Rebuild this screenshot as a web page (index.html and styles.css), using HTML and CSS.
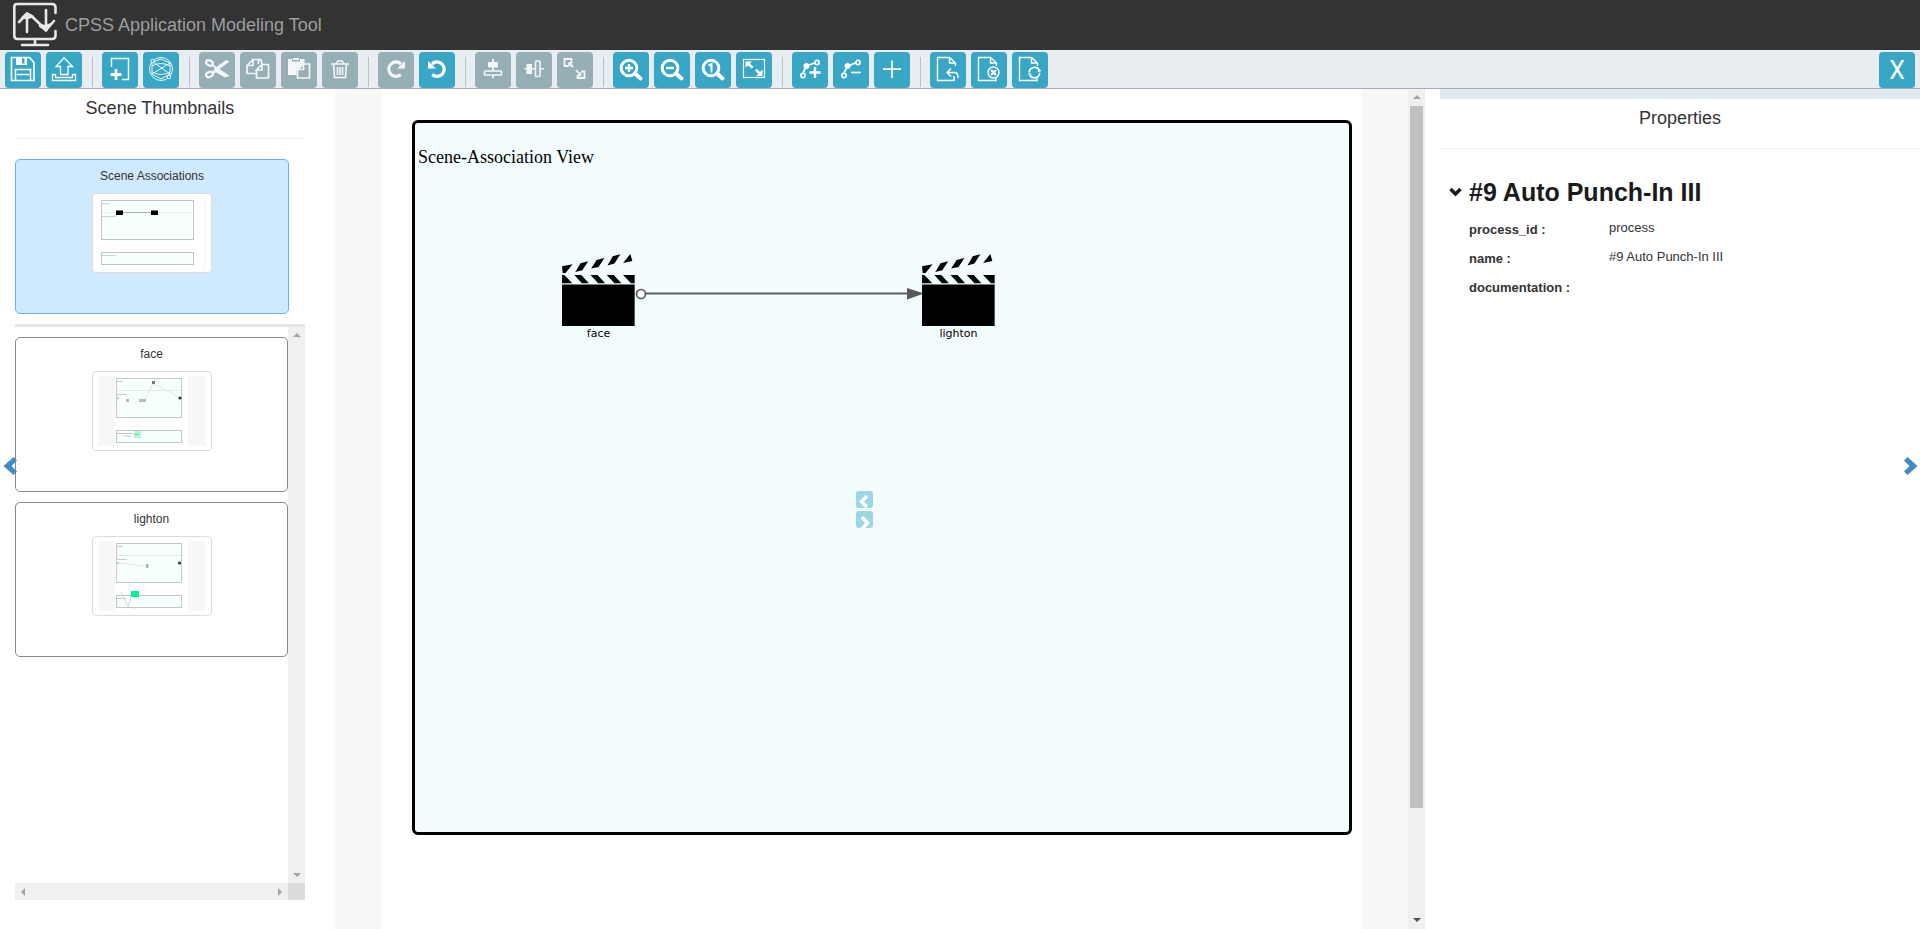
FILE: index.html
```html
<!DOCTYPE html>
<html lang="en">
<head>
<meta charset="utf-8">
<title>CPSS Application Modeling Tool</title>
<link rel="stylesheet" href="styles.css">
</head>
<body>
<svg width="0" height="0" class="defs" aria-hidden="true">
  <defs>
    <symbol id="clapper" viewBox="0 0 220 217">
      <path d="M0 37L32 31L10 58L2 57ZM40 54L56 28L79 22L61 49ZM88 44L104 18L128 12L110 39ZM137 35L153 7L176 1L158 29ZM184 27L206 0L212 21ZM0 63H7L31 88H0ZM37 63H58L81 88H60ZM86 63H107L130 88H109ZM135 63H156L179 88H158ZM184 63H219V88H208ZM0 92H219V217H0Z"/>
    </symbol>
    <symbol id="magnifier" viewBox="0 0 36 36">
      <circle cx="16" cy="16" r="7.8" fill="none" stroke="#fff" stroke-width="3"/>
      <path d="M22 21.500L27.500 26.500" stroke="#fff" stroke-width="4" stroke-linecap="round"/>
    </symbol>
    <symbol id="page" viewBox="0 0 36 36">
      <path d="M15 28.500H7.500V5.500H19.500L25.500 11V14M19.500 5.500V11H25.500" fill="none" stroke="#fff" stroke-width="1.4"/>
    </symbol>
    <symbol id="chevron" viewBox="0 0 14 20">
      <path d="M10.500 1L14 4.500L8.500 10L14 15.500L10.500 19L0.500 10Z" fill="currentColor"/>
    </symbol>
  </defs>
</svg>

<header class="topbar">
  <svg class="logo" viewBox="0 0 46 46" width="46" height="46" fill="none" stroke="#e8e8e8" stroke-width="2.600" stroke-linecap="round" stroke-linejoin="round">
    <path d="M43.500 11V5.500Q43.500 2 40 2H5Q2.300 2 2.300 5V33.500Q2.300 37 5.500 37H40Q43.500 37 43.500 33.500V29"/>
    <path d="M23 37V42M10 43H36"/>
    <path d="M15 30V14M7 20L15 12L19.500 14L31 25L34 27V8M28 24L34 28L42 19"/>
    <path d="M10 16L15 11L21 14.500L16 16ZM28 23L34 24L39 22L34 29Z" fill="#e8e8e8" stroke-width="2"/>
  </svg>
  <span class="brand">CPSS Application Modeling Tool</span>
</header>

<nav class="toolbar" aria-label="Tools">
  <button class="tool" aria-label="Save"><svg viewBox="0 0 36 36"><path d="M6.500 5.500H24.500L29 10.500V28.500H6.500Z" fill="none" stroke="#fff" stroke-width="1.600"/><path d="M11 5H17V12H11ZM19.500 5H22V12H19.500ZM11 11.500H22V13H11Z" fill="#fff"/><path d="M10.500 28V17.500H25.500V28M12 22.500H24" fill="none" stroke="#fff" stroke-width="1.600"/></svg></button>
  <button class="tool" aria-label="Export"><svg viewBox="0 0 36 36" fill="none" stroke="#fff" stroke-width="1.300"><path d="M14.500 22.500V14.500H10L18 5.800L26.500 14.500H22V22.500ZM9 22.500H6.500V28.500H29.500V22.500H27M9.500 22V25.500H26.500V22"/></svg></button>
  <span class="sep"></span>
  <button class="tool" aria-label="New scene"><svg viewBox="0 0 36 36" fill="none" stroke="#fff"><path d="M9.500 15V6.500H26.500V27.500H20" stroke-width="1.400"/><path d="M14 17V28M8.500 22.500H19.500" stroke-width="2.800"/></svg></button>
  <button class="tool" aria-label="Network"><svg viewBox="0 0 36 36" fill="none" stroke="#fff" stroke-width=".9"><circle cx="18" cy="17" r="11.500"/><path d="M10 10L18 7L27 11V22L18 27L9 22V11M10 10L27 22M9 22L27 11M9 14Q18 9 27 14M9 20Q18 25 27 20"/><circle cx="9.500" cy="9" r="1.700" fill="#38a7c6"/><circle cx="26" cy="25" r="1.700" fill="#38a7c6"/></svg></button>
  <span class="sep"></span>
  <button class="tool off" aria-label="Cut"><svg viewBox="0 0 36 36" fill="none" stroke="#fff"><ellipse cx="10.500" cy="11" rx="3.600" ry="2.400" stroke-width="2.200" transform="rotate(25 10.500 11)"/><ellipse cx="10.500" cy="22.500" rx="3.600" ry="2.400" stroke-width="2.200" transform="rotate(-25 10.500 22.500)"/><path d="M13.500 12.500L19 16.500L30 23.800L26 25L17 20L13.500 21.500L16 17L13.500 12.500ZM18 15L27 8.500L30 9.500L20 17Z" fill="#fff" stroke-width=".8"/></svg></button>
  <button class="tool off" aria-label="Copy"><svg viewBox="0 0 36 36" fill="none" stroke="#fff" stroke-width="1.700"><path d="M15.500 21.500H7V13.500L13 7.500H18.500V12M13 7.500V13.500H7"/><path d="M16.500 18V26H28.500V12.500H22L16.500 18H22V12.500M18.500 7.500H21L22 12"/></svg></button>
  <button class="tool off" aria-label="Paste"><svg viewBox="0 0 36 36"><path d="M7 7H11V9.500H19V7H23.500V11L15.500 17V23H7ZM12 6H18V8H12Z" fill="#fff"/><path d="M16.500 17.500V26H28.500V12H22.500L16.500 17.500H22.500V12" fill="#96afb5" stroke="#fff" stroke-width="1.700"/></svg></button>
  <button class="tool off" aria-label="Delete"><svg viewBox="0 0 36 36" fill="none" stroke="#fff" stroke-width="1.600"><path d="M9 12H27M14 11.500L16 9H20L22 11.500M11.500 12L12.500 25.500H23.500L24.500 12M15.500 15V23M18 15V23M20.500 15V23"/></svg></button>
  <span class="sep"></span>
  <button class="tool off" aria-label="Redo"><svg viewBox="0 0 36 36"><path d="M22.800 22.500A7.200 7.200 0 1 1 23 12" fill="none" stroke="#fff" stroke-width="3.200"/><path d="M27 9V16.500H19Z" fill="#fff"/></svg></button>
  <button class="tool" aria-label="Undo"><svg viewBox="0 0 36 36"><path d="M13.200 22.500A7.200 7.200 0 1 0 13 12" fill="none" stroke="#fff" stroke-width="3.200"/><path d="M9 9V16.500H17Z" fill="#fff"/></svg></button>
  <span class="sep"></span>
  <button class="tool off" aria-label="Align center"><svg viewBox="0 0 36 36"><path d="M13 10H23V15.500H13ZM17 7H19V26H17Z" fill="#fff"/><rect x="9.500" y="19" width="17" height="4" rx="1" fill="#96afb5" stroke="#fff" stroke-width="1.700"/></svg></button>
  <button class="tool off" aria-label="Align middle"><svg viewBox="0 0 36 36"><path d="M10.500 12H16V22H10.500ZM8.500 16H28V17.500H8.500Z" fill="#fff"/><rect x="19.500" y="9" width="4.500" height="15.500" rx="1" fill="#96afb5" stroke="#fff" stroke-width="1.600"/></svg></button>
  <button class="tool off" aria-label="Same size"><svg viewBox="0 0 36 36" fill="none" stroke="#fff" stroke-width="1.800"><path d="M14.500 11V7H7.500V14H11M24 19.500H27.500V26H20.500V23"/><path d="M11.500 10.500H15.500L11.500 14.500ZM24 20V24H20Z" fill="#fff" stroke-width=".6"/><path d="M12.500 11.500L16 15M19 18L23 22.500"/></svg></button>
  <span class="sep"></span>
  <button class="tool" aria-label="Zoom in"><svg viewBox="0 0 36 36"><use href="#magnifier"/><path d="M16 12V20M12 16H20" stroke="#fff" stroke-width="2.400"/></svg></button>
  <button class="tool" aria-label="Zoom out"><svg viewBox="0 0 36 36"><use href="#magnifier"/><path d="M12 16H20" stroke="#fff" stroke-width="2.400"/></svg></button>
  <button class="tool" aria-label="Actual size"><svg viewBox="0 0 36 36"><use href="#magnifier"/><path d="M13.500 13.500L16.500 12V20.500" fill="none" stroke="#fff" stroke-width="2"/></svg></button>
  <button class="tool" aria-label="Fit"><svg viewBox="0 0 36 36"><rect x="7.500" y="7.500" width="21" height="18" fill="none" stroke="#fff" stroke-width="1.200"/><path d="M9.500 9.500H16L14 11.500L17.500 15L15.500 16.500L12 13.500L9.500 15.500ZM26.500 24V17.500L24 20L21 17L19 18.500L22.500 22L20 24Z" fill="#fff"/></svg></button>
  <span class="sep"></span>
  <button class="tool" aria-label="Add bend point"><svg viewBox="0 0 36 36" fill="none" stroke="#fff" stroke-width="1.700"><circle cx="11" cy="23.500" r="2.100"/><circle cx="25" cy="10.500" r="2.100"/><path d="M11 21L14.500 14L22.500 11"/><circle cx="14.500" cy="14" r="2.600" fill="#fff" stroke-width="1"/><path d="M23 15V26M17.500 20.500H28.500" stroke-width="2.400"/></svg></button>
  <button class="tool" aria-label="Remove bend point"><svg viewBox="0 0 36 36" fill="none" stroke="#fff" stroke-width="1.700"><circle cx="11" cy="23.500" r="2.100"/><circle cx="25" cy="10.500" r="2.100"/><path d="M11 21L14.500 14L22.500 11"/><circle cx="14.500" cy="14" r="2.600" fill="#fff" stroke-width="1"/><path d="M18 20.500H28"/></svg></button>
  <button class="tool" aria-label="Add"><svg viewBox="0 0 36 36"><path d="M18 8.500V26M9 17.200H27" stroke="#fff" stroke-width="1.800"/></svg></button>
  <span class="sep"></span>
  <button class="tool" aria-label="Revert page"><svg viewBox="0 0 36 36"><use href="#page"/><path d="M15 28.500H24V24M17 20.500H25Q28 20.500 28 26M21 16.500L17 20.500L21 24.500" fill="none" stroke="#fff" stroke-width="1.500"/></svg></button>
  <button class="tool" aria-label="Close page"><svg viewBox="0 0 36 36" fill="none" stroke="#fff" stroke-width="1.400"><use href="#page"/><path d="M15 28.500H25V26"/><circle cx="22.500" cy="20.500" r="5.500"/><path d="M20 18L25 23M25 18L20 23" stroke-width="2"/></svg></button>
  <button class="tool" aria-label="Refresh page"><svg viewBox="0 0 36 36" fill="none" stroke="#fff" stroke-width="1.700"><use href="#page"/><path d="M15 28.500H25V26" stroke-width="1.400"/><path d="M17.200 20.500A5.300 5.300 0 0 1 27.500 19M27.700 21A5.300 5.300 0 0 1 17.500 22.500"/><path d="M29 18L27.500 20L25.500 19M16 22.500L17.500 21L19.500 22.500" stroke-width="1"/></svg></button>
  <button class="tool close">X</button>
</nav>

<main class="workspace">
  <aside class="scenes">
    <h2 class="panel-title">Scene Thumbnails</h2>
    <button class="card selected">
      <span>Scene Associations</span>
      <svg class="thumb" viewBox="0 0 118 78">
        <rect x="8.500" y="6.500" width="92" height="39" fill="#f8ffff" stroke="#bfc5c5"/>
        <rect x="8.500" y="58.500" width="92" height="12" fill="#f8ffff" stroke="#bfc5c5"/>
        <path d="M9 9.500H17M9 22.500H23M9 61.500H23" stroke="#cdd4d4"/>
        <path d="M9 18.500H100" stroke="#e8eeee"/><path d="M30 18.500H58" stroke="#aab0b0"/>
        <path d="M23 17H30V21H23ZM58 17H65V21H58Z"/><path d="M23 16.500H30M58 16.500H65" stroke="#777"/>
        <path d="M112 4V74" stroke="#f8f8f8" stroke-width="2"/>
      </svg>
    </button>
    <div class="scene-scroll">
      <div class="scene-list">
        <button class="card">
          <span>face</span>
          <svg class="thumb" viewBox="0 0 118 78">
            <path d="M5 4H22V74H5ZM95 4H113V74H95Z" fill="#f7f7f7"/>
            <rect x="23.500" y="6.500" width="65" height="39" fill="#f8ffff" stroke="#bfc9c9"/>
            <rect x="23.500" y="58.500" width="65" height="12" fill="#f8ffff" stroke="#bfc9c9"/>
            <path d="M24 18.500H88" stroke="#e2eaea"/>
            <path d="M52 28L60 11L87 26" fill="none" stroke="#e0e6e6"/>
            <path d="M24 9.500H30M24 22.500H34" stroke="#c5cccc"/>
            <path d="M59 9H62V12H59Z" fill="#777"/><circle cx="87" cy="26" r="1.600" fill="#333"/><circle cx="25" cy="26" r="1.200" fill="#ccc"/>
            <path d="M33 28.500H36M46 28.500H53" stroke="#bbb" stroke-width="3"/>
            <path d="M24 61.500H40" stroke="#c2cac5"/>
            <path d="M31 63H38V65H31Z" fill="#dfe6e1"/><path d="M41 59H48V66H41Z" fill="#b4f9d1"/><path d="M41 62.500H46" stroke="#82cfa2"/>
          </svg>
        </button>
        <button class="card">
          <span>lighton</span>
          <svg class="thumb" viewBox="0 0 118 78">
            <path d="M5 4H22V74H5ZM95 4H113V74H95Z" fill="#f7f7f7"/>
            <rect x="23.500" y="6.500" width="65" height="39" fill="#f8ffff" stroke="#bfc9c9"/>
            <rect x="23.500" y="58.500" width="65" height="12" fill="#f8ffff" stroke="#bfc9c9"/>
            <path d="M24 18.500H88" stroke="#e2eaea"/>
            <path d="M25 26L54 29" stroke="#e0e6e6"/>
            <path d="M24 9.500H30M24 22.500H34M24 61.500H33" stroke="#c5cccc"/>
            <circle cx="25" cy="26" r="1.200" fill="#ccc"/><path d="M53 27H55.500V31H53Z" fill="#b0b0b0"/><circle cx="86.500" cy="26" r="1.600" fill="#333"/>
            <path d="M28 55L35 70L39 58M39 71H42" fill="none" stroke="#d2d8d8"/>
            <path d="M38 54H46V60H38Z" fill="#00f58a"/>
          </svg>
        </button>
      </div>
      <div class="vbar"><i class="tri up"></i><i class="tri down"></i></div>
      <div class="hbar"><i class="tri left"></i><i class="tri right"></i></div>
      <div class="corner"></div>
    </div>
  </aside>

  <section class="stage">
    <div class="gutter"></div>
    <div class="canvas">
      <div class="frame">
        <p class="frame-title">Scene-Association View</p>
        <svg class="edge" viewBox="0 0 290 14" width="290" height="14">
          <path d="M11 6.500H274" stroke="#5a5f5f" stroke-width="2"/>
          <path d="M272 1L289 6.500L272 12.500Z" fill="#585858"/>
          <circle cx="6" cy="7" r="4.500" fill="#fff" stroke="#585858" stroke-width="1.700"/>
        </svg>
        <div class="node node-face"><svg width="73" height="72"><use href="#clapper"/></svg><span>face</span></div>
        <div class="node node-lighton"><svg width="73" height="72"><use href="#clapper"/></svg><span>lighton</span></div>
        <div class="mini">
          <button aria-label="Previous"><svg viewBox="0 0 17 17"><path d="M11 5L5.500 10.800L11 16" fill="none" stroke="#fff" stroke-width="3.600"/></svg></button>
          <button aria-label="Next"><svg viewBox="0 0 17 17"><path d="M6 6L11.500 12L6 18" fill="none" stroke="#fff" stroke-width="3.600"/></svg></button>
        </div>
      </div>
    </div>
    <div class="gutter"></div>
    <div class="vbar main-bar"><i class="tri up"></i><div class="thumbbar"></div><i class="tri down dark"></i></div>
  </section>

  <aside class="properties">
    <h2 class="panel-title">Properties</h2>
    <div class="props">
      <h1><svg width="13" height="10" viewBox="0 0 13 10"><path d="M1.500 2L6.500 7L11.500 2" fill="none" stroke="#1a1a1a" stroke-width="3.400"/></svg>#9 Auto Punch-In III</h1>
      <dl>
        <dt>process_id :</dt><dd>process</dd>
        <dt>name :</dt><dd>#9 Auto Punch-In III</dd>
        <dt>documentation :</dt><dd></dd>
      </dl>
    </div>
  </aside>
  <button class="side side-left" aria-label="Collapse scenes"><svg width="14" height="20"><use href="#chevron"/></svg></button>
  <button class="side side-right" aria-label="Collapse properties"><svg width="14" height="20"><use href="#chevron"/></svg></button>
</main>
</body>
</html>
```

FILE: styles.css
```css
* { box-sizing: border-box; }
body {
  margin: 0;
  height: 100vh;
  display: flex;
  flex-direction: column;
  overflow: hidden;
  font-family: "Liberation Sans", Arial, sans-serif;
  color: #333;
  background: #fff;
}
button { font: inherit; color: inherit; border: 0; padding: 0; background: none; }
svg { display: block; }
.defs { position: absolute; }

.topbar {
  display: flex;
  align-items: center;
  gap: 7px;
  height: 50px;
  padding-left: 12px;
  background: #333;
}
.brand { font-size: 18px; color: #9d9d9d; }

.toolbar {
  display: flex;
  gap: 5px;
  padding: 2px 5px 0;
  background: #e8edf1;
  border-bottom: 1px solid #a5adbb;
}
.tool {
  width: 36px;
  height: 36px;
  border-radius: 4px;
  background: #38a7c6;
  color: #fff;
}
.tool.off { background: #96afb5; }
.tool.off svg { opacity: 0.9; }
.close { margin-left: auto; font: 25px/38px Roboto, sans-serif; }
.sep { width: 1px; margin: 5px 4px 1px 5px; background: #b9c1cb; }

.workspace { position: relative; flex: 1; min-height: 0; display: flex; }
.scenes {
  width: 335px;
  padding: 0 30px 29px 15px;
  display: flex;
  flex-direction: column;
}
.panel-title {
  margin: 0;
  padding: 9px 0 19px;
  font-size: 18px;
  line-height: 21px;
  font-weight: 400;
  text-align: center;
  border-bottom: 1px solid #eee;
}
.card {
  display: flex;
  flex-direction: column;
  align-items: center;
  gap: 9px;
  height: 155px;
  padding-top: 8px;
  border: 1px solid #888;
  border-radius: 5px;
  font-size: 12px;
  line-height: 16px;
}
.selected {
  margin: 20px 16px 10px 0;
  background: #cfeaff;
  border-color: #66b2fa;
  flex-shrink: 0;
}
.thumb {
  width: 120px;
  height: 80px;
  border: 1px solid #ddd;
  border-radius: 4px;
  background: #fff;
}
.scene-scroll {
  flex: 1;
  min-height: 0;
  display: grid;
  grid-template: 1fr 17px / 1fr 17px;
  border-top: 3px solid #e6e6e6;
}
.scene-list { display: flex; flex-direction: column; gap: 10px; padding-top: 10px; min-height: 0; }
.vbar, .hbar {
  display: flex;
  justify-content: space-between;
  align-items: center;
  padding: 6px 0;
  background: #f0f0f0;
}
.vbar { flex-direction: column; }
.hbar { padding: 0 6px; }
.corner { background: #dcdcdc; }
.tri { border: 4px solid transparent; }
.up { border-top: 0; border-bottom-color: #a3a3a3; }
.down { border-bottom: 0; border-top-color: #a3a3a3; }
.left { border-left: 0; border-right-color: #a3a3a3; }
.right { border-right: 0; border-left-color: #a3a3a3; }
.dark { border-top-color: #505050; }

.stage { flex: 1; display: flex; }
.gutter { width: 47px; background: #f8f8f8; }
.canvas { flex: 1; padding: 31px 9px 0 30px; }
.frame {
  position: relative;
  height: 715px;
  padding: 24px 3px;
  border: 3px solid #000;
  border-radius: 6px;
  background: #f3fcfd;
}
.frame-title {
  margin: 0;
  font: 18px/21px "Liberation Serif", "Times New Roman", serif;
  color: #000;
}
.node {
  position: absolute;
  top: 131px;
  display: flex;
  flex-direction: column;
  align-items: center;
  gap: 1px;
  font: 11px/13px "DejaVu Sans", sans-serif;
  color: #000;
}
.node-face { left: 147px; }
.node-lighton { left: 507px; }
.edge { position: absolute; left: 220px; top: 164px; }
.mini {
  position: absolute;
  left: 441px;
  top: 368px;
  display: flex;
  flex-direction: column;
  gap: 3px;
}
.mini button { width: 17px; height: 17px; border-radius: 3px; background: #9ad6e4; }
.mini svg { overflow: visible; }
.main-bar { width: 17px; gap: 7px; padding-bottom: 7px; }
.thumbbar { width: 13px; height: 702px; margin-bottom: auto; background: #c1c1c1; }

.properties { width: 25%; margin-left: 15px; border-top: 10px solid #e0e9ec; }
.props { padding: 29px 9px; }
.props h1 {
  display: flex;
  align-items: center;
  gap: 7px;
  margin: 0 0 12px;
  font-size: 25px;
  line-height: 28px;
  color: #1a1a1a;
}
.props dl {
  display: grid;
  grid-template-columns: 140px 1fr;
  grid-auto-rows: 29px;
  margin: 0 0 0 20px;
  font-size: 13px;
  line-height: 20px;
}
.props dt { font-weight: 700; padding-top: 2px; }
.props dd { margin: 0; }

.side { position: absolute; top: 367px; color: #428bca; }
.side-left { left: 3px; }
.side-right { right: 2px; transform: scaleX(-1); }
```
